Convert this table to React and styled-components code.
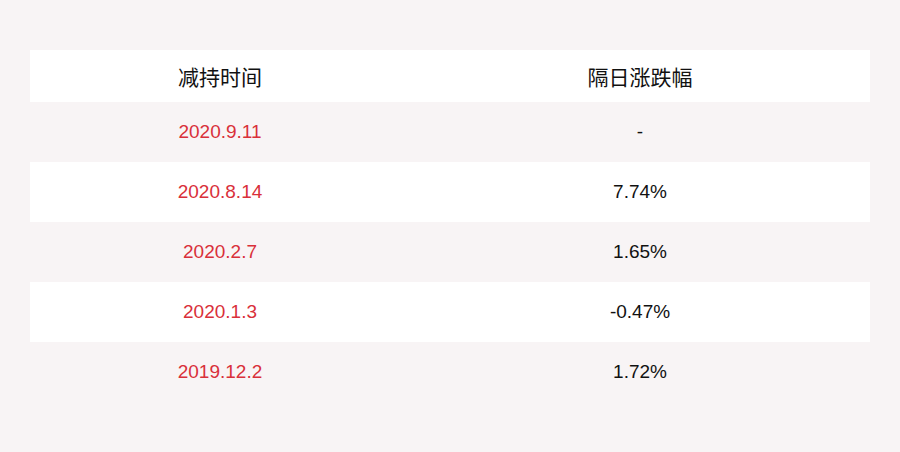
import React from 'react';
import styled, { createGlobalStyle } from 'styled-components';

const GlobalStyle = createGlobalStyle`
    html, body {
        margin: 0;
        padding: 0;
        background: #f8f4f5;
    }
`;

const Page = styled.div`
    width: 900px;
    height: 452px;
    box-sizing: border-box;
    padding: 50px 30px 0 30px;
    background: #f8f4f5;
    font-family: "Liberation Sans", Arial, "Noto Sans CJK SC", sans-serif;
`;

const Table = styled.div`
    display: flex;
    flex-direction: column;
`;

const Row = styled.div`
    display: grid;
    grid-template-columns: 380px 460px;
    height: ${props => props.$header ? 52 : 60}px;
    align-items: center;
    background: ${props => props.$white ? '#ffffff' : 'transparent'};
`;

const Cell = styled.div`
    text-align: center;
    font-size: ${props => props.$header ? 21 : 19}px;
    color: ${props => props.$red ? '#d9303a' : '#111111'};
    font-family: ${props => props.$header
        ? '"Noto Sans CJK SC", sans-serif'
        : '"Liberation Sans", Arial, sans-serif'};
`;

const rows = [
    ['2020.9.11', '-'],
    ['2020.8.14', '7.74%'],
    ['2020.2.7', '1.65%'],
    ['2020.1.3', '-0.47%'],
    ['2019.12.2', '1.72%'],
];

export default function App() {
    return <Page>
        <GlobalStyle />
        <Table>
            <Row $header $white>
                <Cell $header>减持时间</Cell>
                <Cell $header>隔日涨跌幅</Cell>
            </Row>
            {rows.map(([date, change], i) => (
                <Row key={date} $white={i % 2 === 1}>
                    <Cell $red>{date}</Cell>
                    <Cell>{change}</Cell>
                </Row>
            ))}
        </Table>
    </Page>;
}
